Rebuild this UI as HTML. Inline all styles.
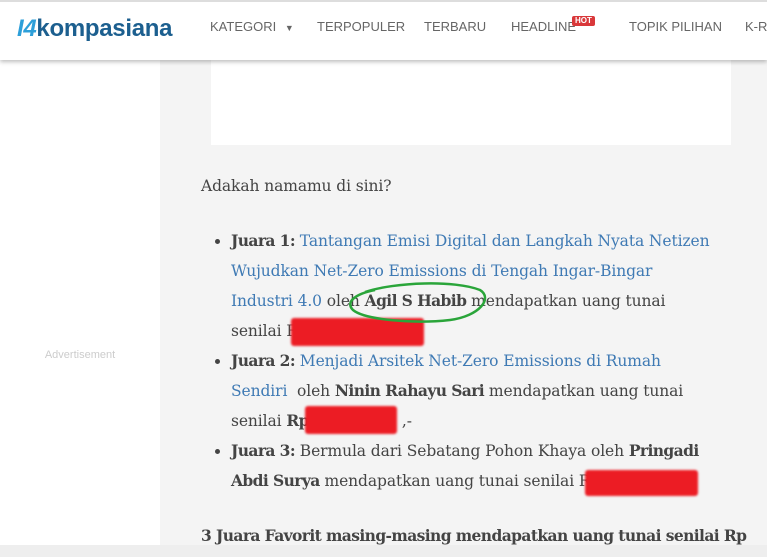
<!DOCTYPE html>
<html><head><meta charset="utf-8"><style>
*{margin:0;padding:0;box-sizing:border-box}
body{width:767px;height:557px;overflow:hidden;background:#f4f4f4;position:relative;font-family:"DejaVu Serif","Liberation Serif",serif;color:#444}
.hdr{position:absolute;left:0;top:0;width:767px;height:60px;background:#fff;border-top:2px solid #ddd;box-shadow:0 2px 4px rgba(0,0,0,.25);z-index:5}
.nav{position:absolute;top:17px;font-family:"Liberation Sans",sans-serif;font-size:13px;color:#666;white-space:nowrap}
.hot{position:absolute;top:-3px;background:#d9383a;color:#fff;font-size:8px;font-weight:bold;padding:0 3px;border-radius:2px;line-height:10px}
.left{position:absolute;left:0;top:60px;width:160px;height:497px;background:#fff}
.ad{position:absolute;left:0;width:160px;top:349px;text-align:center;font-family:"Liberation Sans",sans-serif;font-size:11px;color:#ccc}
.box{position:absolute;left:211px;top:60px;width:520px;height:85px;background:#fff}
.ln{position:absolute;white-space:nowrap;font-size:15.5px;letter-spacing:-0.1px;line-height:20px}
a{color:#3f7ab4;text-decoration:none}
b{color:#444;letter-spacing:-0.6px}
.dot{position:absolute;width:5px;height:5px;border-radius:50%;background:#444}
.red{position:absolute;background:#ec1c24;border-radius:3px;filter:blur(1px)}
.bot{position:absolute;left:0;top:545px;width:767px;height:12px;background:#eee}
</style></head><body>
<div class="hdr">
 <div style="position:absolute;left:17px;top:13px;font-family:'Liberation Sans',sans-serif;font-size:24px;font-weight:bold;letter-spacing:-0.3px;white-space:nowrap"><span style="color:#2d9fd9;font-style:italic">I4</span><span style="color:#1c5f8f">kompasiana</span></div>
 <div class="nav" style="left:210px">KATEGORI <span style="font-size:9px;margin-left:5px">▼</span></div>
 <div class="nav" style="left:317px">TERPOPULER</div>
 <div class="nav" style="left:424px">TERBARU</div>
 <div class="nav" style="left:511px">HEADLINE<span class="hot" style="left:61px">HOT</span></div>
 <div class="nav" style="left:629px">TOPIK PILIHAN</div>
 <div class="nav" style="left:745px">K-RE</div>
</div>
<div class="left"></div>
<div class="ad">Advertisement</div>
<div class="box"></div>

<div class="ln" style="left:201px;top:176px">Adakah namamu di sini?</div>

<div class="dot" style="left:215px;top:239px"></div>
<div class="ln" style="left:231px;top:231px"><b>Juara 1:</b> <a>Tantangan Emisi Digital dan Langkah Nyata Netizen</a></div>
<div class="ln" style="left:231px;top:261px"><a>Wujudkan Net-Zero Emissions di Tengah Ingar-Bingar</a></div>
<div class="ln" style="left:231px;top:291px"><a>Industri 4.0</a> oleh <b>Agil S Habib</b> mendapatkan uang tunai</div>
<div class="ln" style="left:231px;top:321px">senilai Rp</div>
<div class="red" style="left:291px;top:318px;width:133px;height:28px"></div>

<div class="dot" style="left:215px;top:359px"></div>
<div class="ln" style="left:231px;top:351px"><b>Juara 2:</b> <a>Menjadi Arsitek Net-Zero Emissions di Rumah</a></div>
<div class="ln" style="left:231px;top:381px"><a>Sendiri</a>&nbsp; oleh <b>Ninin Rahayu Sari</b> mendapatkan uang tunai</div>
<div class="ln" style="left:231px;top:411px">senilai <b>Rp</b><span style="display:inline-block;width:93px"></span>,-</div>
<div class="red" style="left:305px;top:406px;width:92px;height:28px"></div>

<div class="dot" style="left:215px;top:449px"></div>
<div class="ln" style="left:231px;top:441px"><b>Juara 3:</b> Bermula dari Sebatang Pohon Khaya oleh <b>Pringadi</b></div>
<div class="ln" style="left:231px;top:471px"><b>Abdi Surya</b> mendapatkan uang tunai senilai Rp</div>
<div class="red" style="left:585px;top:470px;width:113px;height:26px"></div>

<div class="ln" style="left:201px;top:526px"><b>3 Juara Favorit masing-masing mendapatkan uang tunai senilai Rp</b></div>

<svg style="position:absolute;left:345px;top:278px" width="145" height="50"><path d="M20 14 C50 4 110 2 135 12 C148 20 135 38 105 42 C70 46 20 42 8 32 C0 24 10 16 30 12" fill="none" stroke="#2aa53a" stroke-width="2.5"/></svg>
<div class="bot"></div>
</body></html>
